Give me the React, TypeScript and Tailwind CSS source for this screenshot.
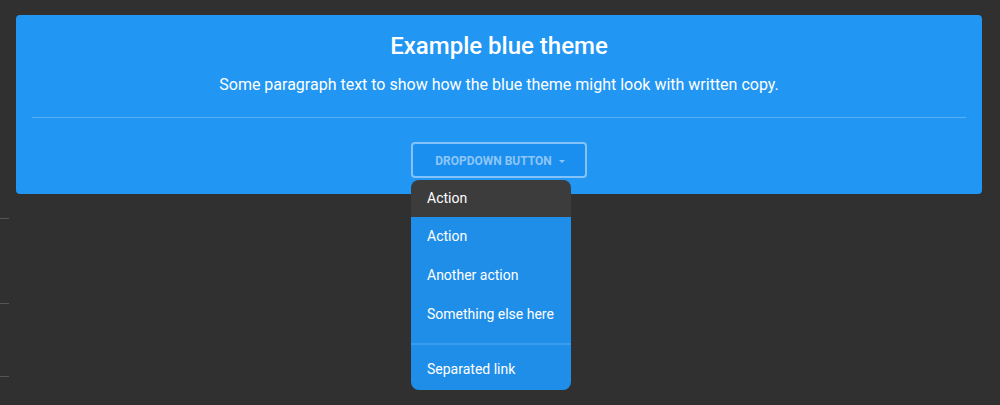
const menuItems = ["Action", "Another action", "Something else here"];

export default function App() {
  return (
    <div
      className="relative h-[405px] w-[1000px] overflow-hidden bg-[#303030] pt-[15px] pl-4"
      style={{ fontFamily: "Roboto, 'Noto Sans', sans-serif" }}
    >
      <div className="absolute left-0 top-[218px] h-px w-[9px] bg-[#555]" />
      <div className="absolute left-0 top-[303px] h-px w-[9px] bg-[#555]" />
      <div className="absolute left-0 top-[376px] h-px w-[9px] bg-[#555]" />

      <div className="w-[966px] rounded bg-[#2196f3] px-4 pt-[17px] pb-4 text-center text-white">
        <h1 className="text-[24px] font-medium leading-[28px]">
          Example blue theme
        </h1>
        <p className="mt-[13px] text-[16px] leading-[24px]">
          Some paragraph text to show how the blue theme might look with
          written copy.
        </p>
        <hr className="mt-[20px] border-t border-[#58b0f6]" />
        <div className="relative mt-6 flex justify-center">
          <button className="flex h-[36px] w-[176px] items-center justify-center gap-[7px] rounded border-2 border-[#84c3f8] bg-[#1a8ff0] pt-[2px] pl-[2px] text-[12px] font-bold text-[#8ec6f7]">
            DROPDOWN BUTTON
            <span className="h-0 w-0 border-x-[3.5px] border-t-[3.5px] border-x-transparent border-t-[#8ec6f7]" />
          </button>
          <div className="absolute left-[379px] top-[38px] z-10 w-[160px] overflow-hidden rounded-lg bg-[#1f8ee9] text-left text-[14px] text-white">
            <div className="flex h-[37px] items-center bg-[#3c3c3c] px-4">
              Action
            </div>
            {menuItems.map((item) => (
              <div className="flex h-[39px] items-center px-4" key={item}>
                {item}
              </div>
            ))}
            <div className="mt-[9px] mb-[7px] h-[2px] bg-[#3a9cee]" />
            <div className="flex h-[36px] items-center px-4 pb-px">
              Separated link
            </div>
            <div className="h-[2px]" />
          </div>
        </div>
      </div>
    </div>
  );
}
